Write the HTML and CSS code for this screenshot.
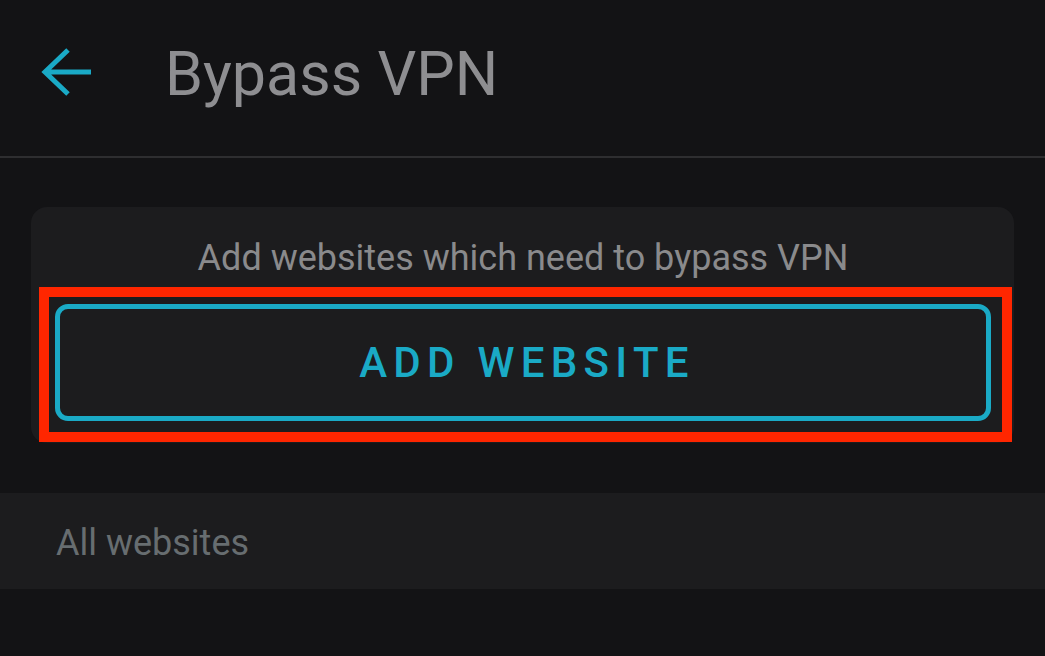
FILE: index.html
```html
<!DOCTYPE html>
<html>
<head>
    <title>Bypass VPN</title>
    <meta name="viewport" content="width=device-width, initial-scale=1.0">
    <link rel="stylesheet" href="styles.css">
</head>
<body>
    <div class="header">
        <svg class="back" width="52" height="52" viewBox="0 0 52 52">
            <path d="M51 26 H5 M28 4 L5 26 L28 48" fill="none" stroke="#1aaac6" stroke-width="5"/>
        </svg>
        <h1>Bypass VPN</h1>
    </div>

    <div class="card">
        <p class="hint">Add websites which need to bypass VPN</p>
        <button class="add-button">ADD WEBSITE</button>
        <div class="highlight"></div>
    </div>

    <div class="list-header">All websites</div>
</body>
</html>
```

FILE: styles.css
```css
body {
    background-color: #131315;
    font-family: Roboto, 'Noto Sans', sans-serif;
    margin: 0;
}

.header {
    display: flex;
    align-items: center;
    height: 148px;
    padding: 0 0 8px 40px;
    border-bottom: 2px solid #2e2e30;
}

.back {
    display: block;
    margin-top: -4px;
}

h1 {
    margin: 0 0 0 73px;
    font-size: 61px;
    font-weight: 400;
    color: #8e8e91;
}

.card {
    position: relative;
    margin: 49px 31px 0 31px;
    padding: 30px 23px 22px 24px;
    background-color: #1c1c1e;
    border-radius: 16px;
}

.hint {
    margin: 0 0 25px 0;
    text-align: center;
    font-size: 36px;
    color: #8a8a8c;
}

.add-button {
    display: block;
    width: 100%;
    height: 117px;
    background: transparent;
    border: 5px solid #1aaac6;
    border-radius: 13px;
    color: #1aaac6;
    font-family: Roboto, sans-serif;
    font-size: 42px;
    font-weight: 500;
    letter-spacing: 6.3px;
    padding: 0 0 0 8px;
}

.highlight {
    position: absolute;
    left: 8px;
    top: 80px;
    width: 973px;
    height: 155px;
    box-sizing: border-box;
    border: 10px solid #ff2600;
}

.list-header {
    margin-top: 50px;
    height: 93px;
    padding: 3px 0 0 56px;
    display: flex;
    align-items: center;
    background-color: #1c1c1e;
    font-size: 36px;
    color: #676d70;
}
```
